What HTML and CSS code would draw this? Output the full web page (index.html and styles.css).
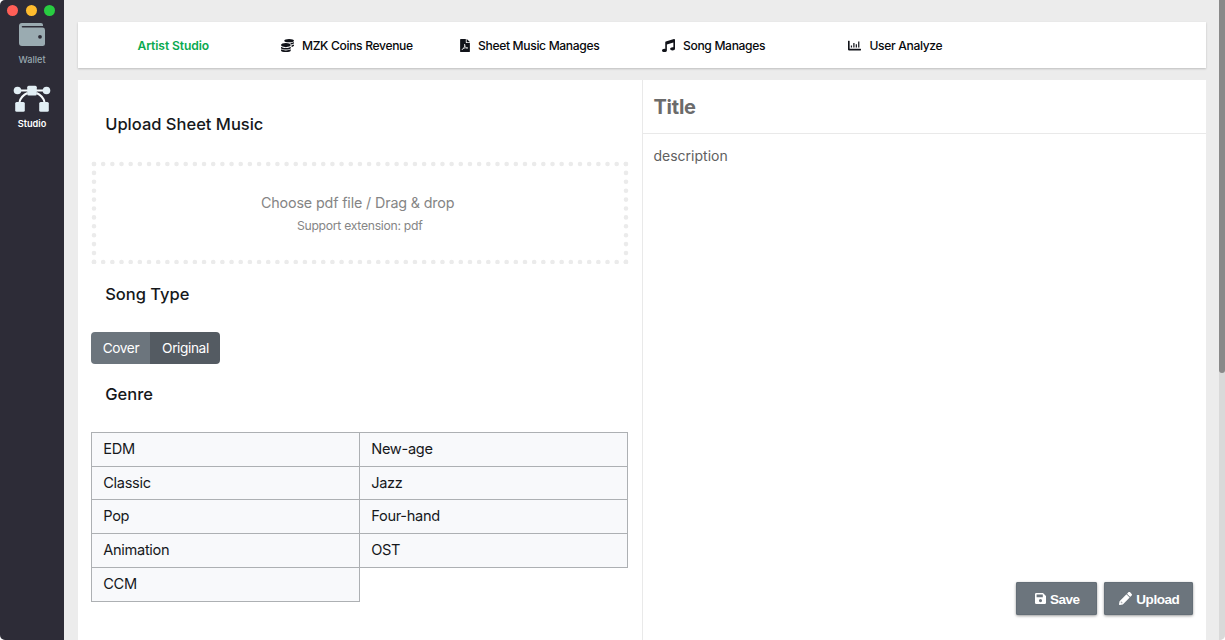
FILE: index.html
```html
<!DOCTYPE html>
<html lang="en">
<head>
<meta charset="utf-8">
<title>Artist Studio</title>
<link rel="stylesheet" href="styles.css">
</head>
<body>
<div class="window">
  <aside class="sidebar">
    <div class="lights"><i class="light red"></i><i class="light yellow"></i><i class="light green"></i></div>
    <a class="side-item wallet">
      <svg width="28" height="24" viewBox="0 0 28 24"><path fill="#9aabb1" fill-rule="evenodd" d="M4 0H23a2 2 0 0 1 2 2v1H4.500a.8.8 0 0 0 0 1.600H24.500A2.500 2.500 0 0 1 27 7v13.500a2.500 2.500 0 0 1-2.500 2.500H4A3 3 0 0 1 1 20V3a3 3 0 0 1 3-3zM22 11.900a1.900 1.900 0 1 0 0 3.800 1.900 1.900 0 0 0 0-3.800z"/></svg>
      <span>Wallet</span>
    </a>
    <a class="side-item studio">
      <svg width="38" height="28" viewBox="0 0 38 28"><g fill="none" stroke="#f4f9fb" stroke-width="2"><path d="M5 5.500h28"/><path d="M14.500 8C10 10 7.500 13 6.500 17M23.500 8c4.500 2 7 5 8 9"/></g><g fill="#e2eff5"><circle cx="4.500" cy="5.500" r="3.800"/><circle cx="33.500" cy="5.500" r="3.800"/><rect x="14.200" y=".8" width="9.600" height="9.600" rx="1.500"/><rect x="2.200" y="17" width="9.600" height="9.800" rx="1.500"/><rect x="26.200" y="17" width="9.600" height="9.800" rx="1.500"/></g></svg>
      <span>Studio</span>
    </a>
  </aside>
  <main class="main">
    <nav class="tabs">
      <a class="tab active"><span>Artist Studio</span></a>
      <a class="tab"><svg width="13" height="13" viewBox="0 0 512 512"><path d="M0 405.300V448c0 35.300 86 64 192 64s192-28.700 192-64v-42.700C342.700 434.400 267.200 448 192 448S41.300 434.400 0 405.300zM320 128c106 0 192-28.700 192-64S426 0 320 0 128 28.700 128 64s86 64 192 64zM0 300.400V352c0 35.300 86 64 192 64s192-28.700 192-64v-51.600c-41.300 34-116.900 51.600-192 51.600S41.300 334.400 0 300.400zm416 11c57.300-11.100 96-31.700 96-55.400v-42.700c-23.200 16.400-57.300 27.600-96 34.500v63.600zM192 160C86 160 0 195.800 0 240s86 80 192 80 192-35.800 192-80-86-80-192-80zm219.300 56.300c60-10.800 100.700-32 100.700-56.300v-42.700c-35.500 25.100-96.500 38.600-160.700 41.800 29.500 14.300 51.200 33.500 60 57.200z"/></svg><span>MZK Coins Revenue</span></a>
      <a class="tab"><svg width="10" height="13" viewBox="0 0 384 512"><path fill-rule="evenodd" d="M24 0h200v136c0 13 11 24 24 24h136v328c0 13-11 24-24 24H24c-13 0-24-11-24-24V24C0 11 11 0 24 0zm232 0h6l122 122v6H256z"/><path d="M176 205c23 75-17 150-92 215-22-30 84-82 216-75 22 18-35 29-68-3-27-25-62-91-56-137z" fill="none" stroke="#fff" stroke-width="28"/></svg><span>Sheet Music Manages</span></a>
      <a class="tab"><svg width="13" height="13" viewBox="0 0 512 512"><path d="M512 32c0-22-21-37-42-30L150 97c-13 4-22 17-22 31v261c-10-3-21-5-32-5-53 0-96 29-96 64s43 64 96 64 96-29 96-64V215l256-75v185c-10-3-21-5-32-5-53 0-96 29-96 64s43 64 96 64 96-29 96-64z"/></svg><span>Song Manages</span></a>
      <a class="tab"><svg width="13" height="13" viewBox="0 0 512 512"><path d="M0 80q0-16 16-16h32q16 0 16 16v304h432q16 0 16 16v32q0 16-16 16H32q-32 0-32-32zM112 256h48v80h-48zM208 160h48v176h-48zM304 208h48v128h-48zM400 96h48v240h-48z"/></svg><span>User Analyze</span></a>
    </nav>
    <div class="panels">
      <section class="form">
        <h2 class="h-upload">Upload Sheet Music</h2>
        <div class="drop">
          <svg class="dots" width="538" height="103" viewBox="0 0 538 103"><g fill="none" stroke="#ebebeb" stroke-width="4.600" stroke-linecap="round"><path d="M3 3H535.300M3 101H535.300" stroke-dasharray="0 9.170"/><path d="M3 3V101M535 3V101" stroke-dasharray="0 8.900"/></g></svg>
          <p class="choose">Choose pdf file / Drag &amp; drop</p>
          <p class="support">Support extension: pdf</p>
        </div>
        <h2 class="h-type">Song Type</h2>
        <div class="toggle"><button class="cover">Cover</button><button class="original">Original</button></div>
        <h2 class="h-genre">Genre</h2>
        <div class="genres">
          <div>EDM</div><div>New-age</div>
          <div>Classic</div><div>Jazz</div>
          <div>Pop</div><div>Four-hand</div>
          <div>Animation</div><div>OST</div>
          <div>CCM</div>
        </div>
      </section>
      <section class="editor">
        <div class="title">Title</div>
        <div class="description">description</div>
        <div class="actions">
          <button class="save"><svg width="11" height="11" viewBox="0 0 11 11"><path fill="#fff" fill-rule="evenodd" d="M1.200 0H8l3 3v6.800A1.200 1.200 0 0 1 9.800 11H1.200A1.200 1.200 0 0 1 0 9.800V1.200A1.200 1.200 0 0 1 1.200 0zm.4 1.600v2.700h6.200V1.600zM5.500 6a1.600 1.600 0 1 0 0 3.200 1.600 1.600 0 0 0 0-3.200z"/></svg><span>Save</span></button>
          <button class="upload"><svg width="13" height="13" viewBox="0 0 512 512"><path fill="#fff" d="M498 142l-46 46c-5 5-13 5-17 0L324 77c-5-5-5-12 0-17l46-46c19-19 49-19 68 0l60 60c19 19 19 49 0 68zM284 100L22 362 0 484c-3 16 12 30 28 28l122-22 262-262c5-5 5-13 0-17L301 100c-4-5-12-5-17 0z"/><path d="M88 424v-48M88 424h48" stroke="#6c757d" stroke-width="24"/></svg><span>Upload</span></button>
        </div>
      </section>
    </div>
  </main>
  <div class="scrollbar"><div class="thumb"></div></div>
</div>
</body>
</html>
```

FILE: styles.css
```css
* { box-sizing: border-box; }
body { margin: 0; background: #fff; font-family: Inter, "Liberation Sans", sans-serif; color: #16181b; }
h2, p { margin: 0; }
button { border: 0; padding: 0; font-family: inherit; color: #fff; display: flex; align-items: center; justify-content: center; }
svg { display: block; flex: none; }
span { white-space: nowrap; }
.window { display: flex; width: 1225px; height: 640px; background: #ececec; border-radius: 5px 0 5px 5px; overflow: hidden; }

.sidebar { width: 64px; flex: none; background: #2d2c37; display: flex; flex-direction: column; align-items: center; }
.lights { display: flex; gap: 7.300px; padding-top: 4.500px; align-self: flex-start; padding-left: 7.300px; }
.light { width: 11px; height: 11px; border-radius: 50%; }
.red { background: #ff5f57; }
.yellow { background: #febc2e; }
.green { background: #28cd41; }
.side-item { display: flex; flex-direction: column; align-items: center; font-size: 9.200px; line-height: 12px; }
.wallet { padding-top: 7.500px; color: #99a9b0; font-weight: 500; }
.wallet span { margin-top: 7px; }
.studio { padding-top: 19px; color: #fff; font-weight: 600; }
.studio span { margin-top: 5px; }

.main { flex: 1; padding: 22px 13px 0 13.500px; display: flex; flex-direction: column; gap: 13px; min-width: 0; }
.tabs { height: 45.500px; flex: none; background: #fff; box-shadow: 0 1px 2px rgba(0,0,0,.2); display: grid; grid-template-columns: 143px 179px 202px 186.500px 1fr; padding-left: 60px; }
.tab { display: flex; align-items: center; gap: 8.500px; font-size: 12.100px; font-weight: 500; letter-spacing: -.34px; color: #08090c; padding-top: 1px; }
.active { color: #0aaa50; font-weight: 600; letter-spacing: -.1px; }
.tabs svg { fill: #111319; }
.panels { flex: 1; display: grid; grid-template-columns: 564.500px 1fr; background: #fff; min-height: 0; margin-top: -.5px; }

.form { padding-left: 13.700px; display: flex; flex-direction: column; align-items: flex-start; }
.form h2 { padding-left: 14px; font-size: 16.500px; line-height: 20px; font-weight: 500; }
.h-upload { margin-top: 34px; }
.drop { width: 538px; height: 103px; margin-top: 27px; position: relative; display: flex; flex-direction: column; align-items: center; color: #858585; padding-top: 31.500px; }
.dots { position: absolute; left: 0; top: 0; }
.choose { font-size: 14.300px; letter-spacing: -.14px; line-height: 20px; margin-right: 5px; white-space: nowrap; }
.support { font-size: 12.200px; letter-spacing: -.28px; line-height: 16px; margin-top: 5px; margin-right: 1px; white-space: nowrap; }
.h-type { margin-top: 20px; }
.toggle { display: flex; margin-top: 28px; height: 32px; width: 129px; border-radius: 4px; overflow: hidden; }
.toggle button { font-size: 13.700px; letter-spacing: -.4px; height: 32px; padding-left: 1px; }
.cover { width: 58.500px; background: #6c757d; }
.original { flex: 1; background: #545b62; }
.h-genre { margin-top: 20px; }
.genres { display: grid; grid-template-columns: 269px 268px; grid-template-rows: 35px; grid-auto-rows: 33.750px; margin-top: 27.500px; }
.genres div { border: solid #adb0b3; border-width: 0 1px 1px 0; background: #f8f9fb; padding-left: 11px; line-height: 33px; font-size: 14.600px; letter-spacing: -.3px; }
.genres div:nth-child(odd) { border-left-width: 1px; }
.genres div:nth-child(-n+2) { border-top-width: 1px; }

.editor { border-left: 1px solid #e9e9e9; display: flex; flex-direction: column; }
.title { height: 53.500px; flex: none; border-bottom: 1px solid #e9e9e9; padding: 1px 0 0 10.500px; font-size: 20px; letter-spacing: -.25px; line-height: 53px; font-weight: 700; color: #6b6b6b; }
.description { padding: 12.500px 0 0 10.500px; font-size: 14px; line-height: 20px; color: #606060; }
.actions { display: flex; gap: 7px; justify-content: flex-end; margin-top: auto; padding: 0 12.700px 25px 0; }
.actions button { height: 33px; background: #6c757d; border-radius: 2px; box-shadow: 0 1px 3px rgba(0,0,0,.4), inset 0 0 0 1px #646e77; font-family: "Liberation Sans", Arial, sans-serif; font-size: 13.500px; letter-spacing: -.45px; font-weight: 700; gap: 4px; padding-left: 1px; }
.actions span { padding-top: 1px; }
.save { width: 81px; }
.upload { width: 89px; }

.scrollbar { width: 6px; flex: none; background: #d9d9d9; }
.thumb { height: 373px; background: #898989; border-radius: 0 0 3px 3px; }
```
